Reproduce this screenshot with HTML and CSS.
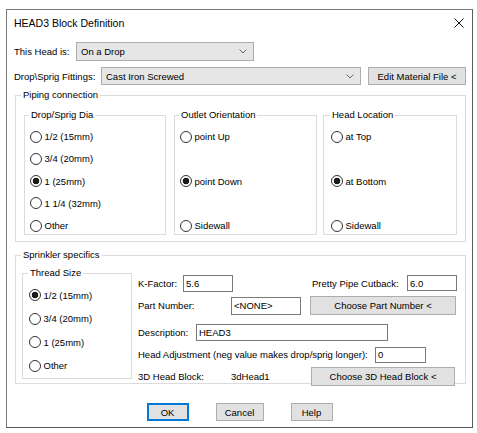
FILE: index.html
```html
<!DOCTYPE html>
<html>
<head>
<meta charset="utf-8">
<link rel="stylesheet" href="styles.css">
</head>
<body>
<div class="window">
  <div class="titlebar">
    <span class="title">HEAD3 Block Definition</span>
    <svg class="close" width="10" height="10" viewBox="0 0 10 10"><path d="M0.5 0.5 L9.5 9.5 M9.5 0.5 L0.5 9.5" stroke="#111" stroke-width="1" fill="none"/></svg>
  </div>

  <div class="row row1">
    <span class="lbl w-head">This Head is:</span>
    <div class="combo combo-head"><span>On a Drop</span><svg class="chev" width="8" height="5" viewBox="0 0 8 5"><path d="M0.5 0.5 L4 4 L7.5 0.5" stroke="#666" fill="none"/></svg></div>
  </div>
  <div class="row row2">
    <span class="lbl w-fit">Drop\Sprig Fittings:</span>
    <div class="combo combo-fit"><span>Cast Iron Screwed</span><svg class="chev" width="8" height="5" viewBox="0 0 8 5"><path d="M0.5 0.5 L4 4 L7.5 0.5" stroke="#666" fill="none"/></svg></div>
    <button class="btn btn-edit">Edit Material File &lt;</button>
  </div>

  <fieldset class="group piping">
    <legend>Piping connection</legend>
    <div class="subgroups">
      <fieldset class="group sub dia">
        <legend>Drop/Sprig Dia</legend>
        <div class="radios">
          <div class="radio"><span class="dot"></span>1/2 (15mm)</div>
          <div class="radio"><span class="dot"></span>3/4 (20mm)</div>
          <div class="radio"><span class="dot on"></span>1 (25mm)</div>
          <div class="radio"><span class="dot"></span>1 1/4 (32mm)</div>
          <div class="radio"><span class="dot"></span>Other</div>
        </div>
      </fieldset>
      <fieldset class="group sub outlet">
        <legend>Outlet Orientation</legend>
        <div class="radios">
          <div class="radio"><span class="dot"></span>point Up</div>
          <div class="radio"><span class="dot on"></span>point Down</div>
          <div class="radio"><span class="dot"></span>Sidewall</div>
        </div>
      </fieldset>
      <fieldset class="group sub headloc">
        <legend>Head Location</legend>
        <div class="radios">
          <div class="radio"><span class="dot"></span>at Top</div>
          <div class="radio"><span class="dot on"></span>at Bottom</div>
          <div class="radio"><span class="dot"></span>Sidewall</div>
        </div>
      </fieldset>
    </div>
  </fieldset>

  <fieldset class="group sprinkler">
    <legend>Sprinkler specifics</legend>
    <div class="spr-inner">
      <fieldset class="group thread">
        <legend>Thread Size</legend>
        <div class="radios thread-radios">
          <div class="radio"><span class="dot on"></span>1/2 (15mm)</div>
          <div class="radio"><span class="dot"></span>3/4 (20mm)</div>
          <div class="radio"><span class="dot"></span>1 (25mm)</div>
          <div class="radio"><span class="dot"></span>Other</div>
        </div>
      </fieldset>
      <div class="specs">
        <div class="srow ra">
          <span class="lbl w-k">K-Factor:</span>
          <div class="textbox tb-k">5.6</div>
          <span class="lbl w-pp">Pretty Pipe Cutback:</span>
          <div class="textbox tb-pp">6.0</div>
        </div>
        <div class="srow rb">
          <span class="lbl w-pn">Part Number:</span>
          <div class="textbox tb-pn">&lt;NONE&gt;</div>
          <button class="btn btn-pn">Choose Part Number &lt;</button>
        </div>
        <div class="srow rc">
          <span class="lbl w-desc">Description:</span>
          <div class="textbox tb-desc">HEAD3</div>
        </div>
        <div class="srow rd">
          <span class="lbl w-adj">Head Adjustment (neg value makes drop/sprig longer):</span>
          <div class="textbox tb-adj">0</div>
        </div>
        <div class="srow re">
          <span class="lbl w-pn">3D Head Block:</span>
          <span class="lbl w-val">3dHead1</span>
          <button class="btn btn-3d">Choose 3D Head Block &lt;</button>
        </div>
      </div>
    </div>
  </fieldset>

  <div class="actions">
    <button class="btn btn-ok">OK</button>
    <button class="btn btn-cancel">Cancel</button>
    <button class="btn btn-help">Help</button>
  </div>
</div>
</body>
</html>
```
FILE: styles.css
```css
* { box-sizing: border-box; }
body {
  margin: 0;
  background: #fff;
  font-family: "Liberation Sans", Arial, sans-serif;
  font-size: 9.5px;
  color: #000;
}
.window {
  margin: 9px 0 0 6px;
  width: 467px;
  height: 419px;
  border: 1px solid #7a7a7a;
  border-right-color: #5a5a5a;
  border-bottom-color: #5a5a5a;
  background: #fff;
}
.titlebar {
  height: 25px;
  display: flex;
  align-items: center;
  justify-content: space-between;
  padding: 0 8px 0 7px;
}
.title { font-size: 10.5px; color: #000; }
.close { display: block; }

.row { display: flex; align-items: center; padding-left: 7px; }
.row1 { margin-top: 7px; }
.row2 { margin-top: 6px; }
.lbl { white-space: nowrap; flex: none; }
.w-head { width: 62px; }
.w-fit { width: 87px; }

.combo {
  display: flex;
  align-items: center;
  justify-content: space-between;
  background: #e6e6e6;
  border: 1px solid #adadad;
  padding: 0 6px 0 4px;
  flex: none;
}
.combo-head { width: 178px; height: 19px; }
.combo-fit { width: 260px; height: 18px; }
.chev { display: block; }

.btn {
  font-family: "Liberation Sans", Arial, sans-serif;
  font-size: 9.5px;
  color: #000;
  background: #e1e1e1;
  border: 1px solid #adadad;
  padding: 0;
  margin: 0;
  flex: none;
}
.btn-edit { margin-left: 7px; width: 98px; height: 18px; }

.group {
  margin: 0;
  border: 1px solid #dcdcdc;
  min-width: 0;
}
.group > legend {
  padding: 0 2px;
  line-height: 12px;
  height: 12px;
  margin-left: -1px;
}
.piping {
  margin: 4px 0 0 8px;
  width: 451px;
  height: 153px;
  padding: 8px 8px 0 8px;
}
.piping > legend { margin-left: -3px; }
.subgroups { display: flex; }
.sub { height: 126px; padding: 0 0 0 5px; }
.dia { width: 142px; }
.outlet { width: 143px; margin-left: 8px; }
.headloc { width: 134px; margin-left: 6px; padding-left: 7px; }

.radios {
  display: flex;
  flex-direction: column;
  justify-content: space-between;
  padding-top: 8.7px;
  height: 111.7px;
}
.radio {
  display: flex;
  align-items: center;
  gap: 2.5px;
  height: 14px;
  white-space: nowrap;
}
.dot {
  width: 12px;
  height: 12px;
  border: 1px solid #333;
  border-radius: 50%;
  background: #fff;
  flex: none;
}
.dot.on { background: radial-gradient(circle, #1a1a1a 0 3px, #fff 3.6px); }

.sprinkler {
  margin: 7px 0 0 8px;
  width: 451px;
  height: 135px;
  padding: 6px 0 0 6px;
}
.sprinkler > legend { margin-left: -1px; }
.spr-inner { display: flex; }
.thread { width: 110px; height: 112px; padding: 0 0 0 6px; }
.thread-radios { padding-top: 9px; height: 94px; }

.specs { margin-left: 6px; padding-top: 7px; display: flex; flex-direction: column; }
.srow { display: flex; align-items: center; }
.ra { height: 18px; }
.rb { height: 19px; margin-top: 4px; }
.rc { height: 18px; margin-top: 8px; }
.rd { height: 17px; margin-top: 5px; }
.re { height: 19px; margin-top: 4px; }
.w-k { width: 45px; }
.w-pp { width: 95px; margin-left: 79px; }
.w-pn { width: 93px; }
.w-desc { width: 58px; }
.w-adj { width: 237px; }
.w-val { width: 80px; }

.textbox {
  border: 1px solid #7a7a7a;
  background: #fff;
  padding: 0 2px;
  display: flex;
  align-items: center;
  flex: none;
  white-space: nowrap;
}
.tb-k { width: 50px; height: 17px; }
.tb-pp { width: 50px; height: 16px; }
.tb-pn { width: 70px; height: 18px; }
.tb-desc { width: 192px; height: 17px; }
.tb-adj { width: 51px; height: 16px; }
.btn-pn { margin-left: 9px; width: 146px; height: 19px; }
.btn-3d { width: 144px; height: 19px; }

.actions {
  display: flex;
  justify-content: center;
  gap: 27px;
  margin-top: 19px;
}
.actions .btn { height: 18px; }
.btn-ok { width: 42px; border: 2px solid #0078d7; }
.btn-cancel { width: 48px; }
.btn-help { width: 42px; }
```
